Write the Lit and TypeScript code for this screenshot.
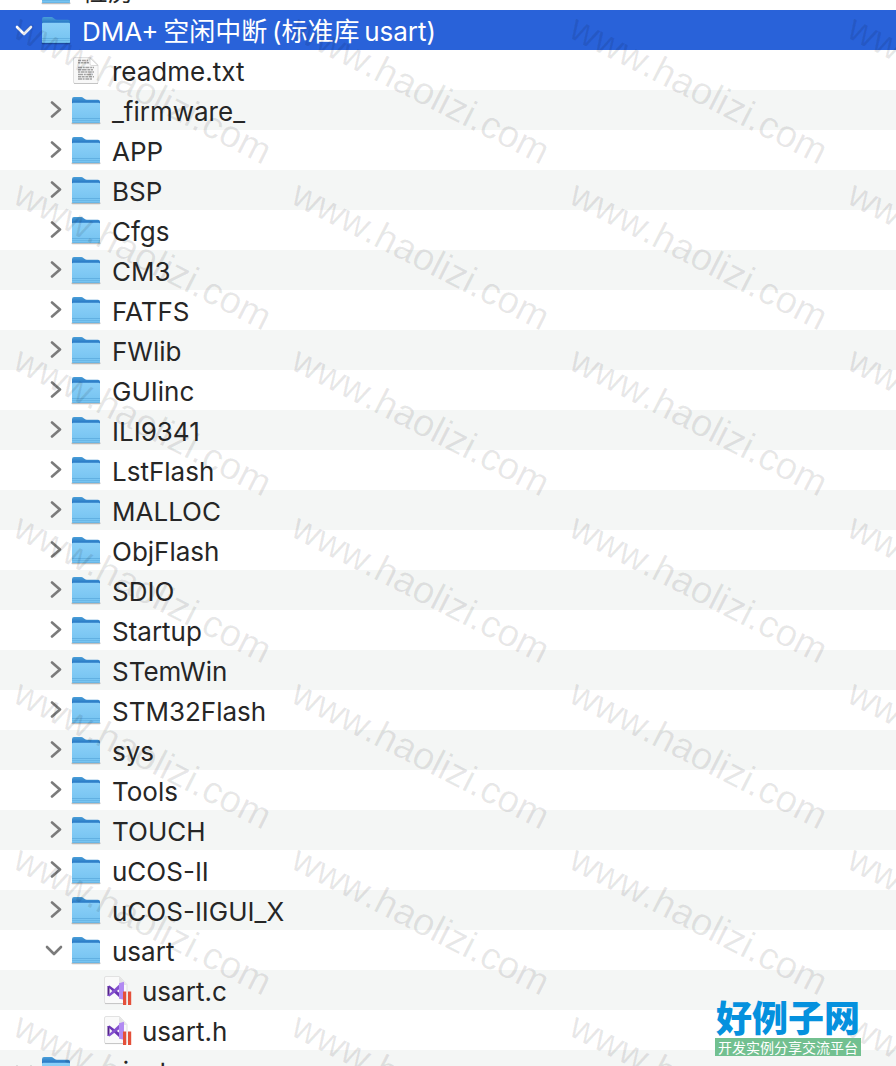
import { LitElement, html, svg, css } from "lit";
import { customElement, property, state } from "lit/decorators.js";

type Kind = "folder" | "text" | "source";
interface Entry {
  name: string;
  level: 0 | 1 | 2;
  kind: Kind;
  open?: boolean;
}

const folder = (name: string, level: 0 | 1 | 2 = 1, open = false): Entry => ({ name, level, kind: "folder", open });

const ENTRIES: Entry[] = [
  folder("检房", 0),
  folder("DMA+\u2009空闲中断\u2009(标准库\u2009usart)", 0, true),
  { name: "readme.txt", level: 1, kind: "text" },
  ...[
    "_firmware_", "APP", "BSP", "Cfgs", "CM3", "FATFS", "FWlib", "GUIinc", "ILI9341", "LstFlash", "MALLOC",
    "ObjFlash", "SDIO", "Startup", "STemWin", "STM32Flash", "sys", "Tools", "TOUCH", "uCOS-II", "uCOS-IIGUI_X",
  ].map((n) => folder(n)),
  folder("usart", 1, true),
  { name: "usart.c", level: 2, kind: "source" },
  { name: "usart.h", level: 2, kind: "source" },
  folder("project", 0, true),
];

@customElement("file-icon")
class FileIcon extends LitElement {
  @property() kind: Kind = "folder";

  static styles = css`
    :host { display: block; width: 30px; height: 30px; }
    svg { display: block; }
  `;

  private folder() {
    return svg`
      <defs>
        <linearGradient id="front" x1="0" y1="0" x2="0" y2="1">
          <stop offset="0" stop-color="#8bd0f8"/><stop offset="1" stop-color="#74c2f0"/>
        </linearGradient>
        <linearGradient id="back" x1="0" y1="0" x2="0" y2="1">
          <stop offset="0" stop-color="#4a9fd9"/><stop offset=".6" stop-color="#2676c4"/>
        </linearGradient>
      </defs>
      <path d="M1.5 28.3h27" stroke="#000" stroke-opacity=".25" stroke-width="2" stroke-linecap="round"/>
      <path d="M1 4.200Q1 2 3 2h7.200q1.300 0 2.200.9l1.400 1.200q.8.7 2 .7H27q2 0 2 2V12H1z" fill="url(#back)"/>
      <path d="M1 8.900Q1 7.700 2.200 7.700h25.600q1.200 0 1.200 1.200v17.500q0 1.600-1.600 1.600H2.600Q1 28 1 26.400z" fill="url(#front)"/>
      <path d="M1 23.500h28" stroke="#62b0e2" stroke-width="1"/>
      <path d="M1 25.500h28M1.300 27.500h27.400" stroke="#68b6e6" stroke-width="1"/>`;
  }

  private text() {
    return svg`<g transform="translate(-1 -1)">
      <path d="M4.500 3.500h16.500l7 7.500v17q0 1.500-1.500 1.500H5q-1.500 0-1.500-1.500V5q0-1.500 1-1.500z" fill="#f8f8f8" stroke="#e0e0e0"/>
      <path d="M4 29.500h24" stroke="#c4c4c4"/>
      <path d="M20 4v6q0 1.500 1.500 1.500H28z" fill="#fff" stroke="#cfcfcf" stroke-width=".8"/>
      <g stroke="#a2a2a2" stroke-width="1.500" fill="none">
        <path d="M8 6.500h10" stroke-dasharray="3 .8 4 1"/>
        <path d="M8 8.700h11" stroke-dasharray="2 .6 3 .5"/>
        <path d="M8 13.500h16" stroke-dasharray="4 .8 2 .6"/>
        <path d="M8 15.700h15" stroke-dasharray="3 .6 5 .8"/>
        <path d="M8 17.900h16" stroke-dasharray="2 .6 4 .6"/>
        <path d="M8 20.500h15" stroke-dasharray="5 .8 2 .6"/>
        <path d="M8 22.700h16" stroke-dasharray="3 .6 3 .8"/>
        <path d="M8 25h14" stroke-dasharray="4 .6 2 .8"/>
      </g></g>`;
  }

  private source() {
    return svg`<g transform="translate(0 -1)">
      <path d="M5 2.500h13.500l7.500 8V28q0 1.500-1.500 1.500H5Q3.500 29.500 3.500 28V4q0-1.500 1.500-1.500z" fill="#fafafa" stroke="#e2e2e2"/>
      <path d="M4 29.600h21" stroke="#c4c4c4"/>
      <path d="M18 2.500 26 11h-6q-2 0-2-2z" fill="#e4e4e4"/>
      <path d="M7.500 12v10" stroke="#52218a" stroke-width="2"/>
      <path d="M6.500 12.500 8.500 11.500 18.500 19v4.500z" fill="#6b35b5"/>
      <path d="M6.500 21.500 8.500 22.500 18.500 15v-4.800z" fill="#8450cf"/>
      <path d="M18 9.200 23 7.700v18L18 24.800z" fill="#b28af2"/>
      <path d="M22 17.500h3.200V31H22zM27 17.500h3.200V31H27z" fill="#e4503a"/></g>`;
  }

  render() {
    return html`<svg width="32" height="32" viewBox="0 0 32 32" aria-hidden="true">${this[this.kind]()}</svg>`;
  }
}

@customElement("app-root")
class AppRoot extends LitElement {
  @state() private selected = 1;

  static styles = css`
    :host {
      display: block;
      position: relative;
      height: 100vh;
      overflow: hidden;
      background: #fff;
      color: #262626;
      font-family: Inter, "Noto Sans CJK SC", sans-serif;
      font-size: 26px;
    }
    ul { list-style: none; margin: -30px 0 0; padding: 0; }
    li:nth-child(even) { background: #f4f6f5; }
    .row {
      display: flex;
      align-items: center;
      width: 100%;
      height: 40px;
      box-sizing: border-box;
      margin: 0;
      border: 0;
      background: none;
      color: inherit;
      font: inherit;
      text-align: left;
      white-space: nowrap;
    }
    .level-0 { padding: 0 15px; }
    .level-1 { padding: 0 45px; }
    .level-2 { padding: 0 75px; }
    .selected { background: #2962d9; color: #fff; }
    .chevron { width: 18px; height: 18px; margin-right: 8px; flex: none; color: #7b7b7b; }
    .selected .chevron { color: #fff; }
    .name { margin-left: 11px; line-height: 36px; padding-top: 4px; }
    .marks {
      position: absolute;
      inset: 0;
      display: grid;
      grid-template-columns: repeat(4, 278px);
      grid-template-rows: repeat(3, 166px 166px 167px);
      padding: 25px 0 0 17px;
      overflow: hidden;
      pointer-events: none;
      color: rgba(0, 0, 0, 0.09);
      font: 38px/0 "Liberation Sans", sans-serif;
      font-kerning: none;
    }
    .marks span { transform: rotate(27deg); transform-origin: 0 0; white-space: nowrap; height: 0; }
    .brand {
      position: absolute;
      right: 35px;
      bottom: 10px;
      font-family: "Noto Sans CJK SC", sans-serif;
      text-align: center;
    }
    .brand strong { display: block; margin-bottom: 3px; font-size: 36px; line-height: 38px; font-weight: 900; color: #0591de; }
    .brand small { display: block; padding: 0 3px; font-size: 14px; line-height: 18px; background: #72c090; color: #fff; }
  `;

  private row(e: Entry, i: number) {
    const cls = `row level-${e.level} ${i === this.selected ? "selected" : ""}`;
    const body = html`
      <svg class="chevron" viewBox="0 0 18 18" fill="none" stroke="currentColor" stroke-width="2.600"
        stroke-linecap="round" stroke-linejoin="round" aria-hidden="true">
        ${e.kind !== "folder" ? "" : e.open ? svg`<path d="M2 6l7 7 7-7"/>` : svg`<path d="M7 1.500l8 7-8 7"/>`}
      </svg>
      <file-icon .kind=${e.kind}></file-icon>
      <span class="name">${e.name}</span>`;
    return html`<li>
      <button class=${cls} @click=${() => (this.selected = i)}>${body}</button>
    </li>`;
  }

  render() {
    return html`
      <ul>${ENTRIES.map((e, i) => this.row(e, i))}</ul>
      <div class="marks" aria-hidden="true">
        ${Array.from({ length: 28 }, () => html`<span>www.haolizi.com</span>`)}
      </div>
      <div class="brand"><strong>好例子网</strong><small>开发实例分享交流平台</small></div>`;
  }
}
